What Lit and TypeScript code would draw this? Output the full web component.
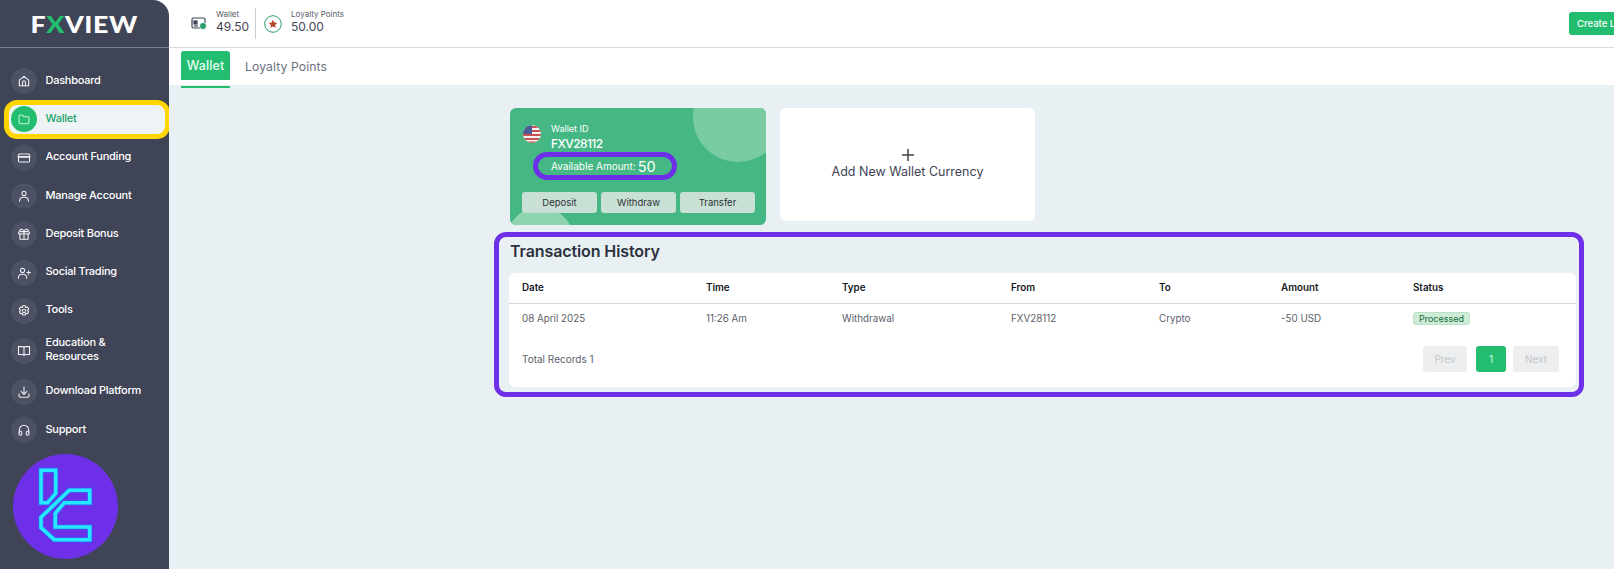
import { LitElement, html, css, svg } from "lit";
import { customElement } from "lit/decorators.js";

const icons: Record<string, any> = {
  home: svg`<path d="M4 10.500 12 4l8 6.500V20H4z"/><path d="M9.500 20v-6a2.500 2.500 0 0 1 5 0v6"/>`,
  folder: svg`<path d="M3.500 7a2 2 0 0 1 2-2h4l2 3h7a2 2 0 0 1 2 2v8a2 2 0 0 1-2 2h-13a2 2 0 0 1-2-2z"/>`,
  card: svg`<rect x="2.500" y="5" width="19" height="14" rx="2"/><path d="M2.500 10h19" stroke-width="3"/>`,
  user: svg`<circle cx="12" cy="7.500" r="3.500"/><path d="M4.500 21v-1.500a6 6 0 0 1 6-5.500h3a6 6 0 0 1 6 5.500V21"/>`,
  gift: svg`<rect x="3" y="8" width="18" height="4"/><path d="M5 12v9h14v-9M12 8v13M12 8c-2-5-7-5-7-2 0 2 4 2 7 2zM12 8c2-5 7-5 7-2 0 2-4 2-7 2z"/>`,
  userPlus: svg`<circle cx="9.500" cy="7.500" r="3.500"/><path d="M2.500 21v-1.500a6 6 0 0 1 6-5.500h2a6 6 0 0 1 6 5.500V21M20 8v6M17 11h6"/>`,
  gear: svg`<circle cx="12" cy="12" r="3"/><path d="M10 3h4l1 3 3-.8 2 3.400-2 2.400 2 2.400-2 3.400-3-.8-1 3h-4l-1-3-3 .8-2-3.400 2-2.400-2-2.400 2-3.400 3 .8z"/>`,
  book: svg`<path d="M2.500 4.500H9c1.700 0 3 1 3 2.500 0-1.500 1.300-2.500 3-2.500h6.500V18H14.500c-1.300 0-2.500.6-2.500 2 0-1.400-1.200-2-2.500-2H2.500zM12 7v13"/>`,
  download: svg`<path d="M3.500 15v4a2 2 0 0 0 2 2h13a2 2 0 0 0 2-2v-4M12 3v13M7 11l5 5 5-5"/>`,
  headset: svg`<path d="M4 16v-4a8 8 0 0 1 16 0v4"/><rect x="3.500" y="14" width="4.500" height="7" rx="2"/><rect x="16" y="14" width="4.500" height="7" rx="2"/>`,
};

const nav = [
  ["Dashboard", "home"],
  ["Wallet", "folder"],
  ["Account Funding", "card"],
  ["Manage Account", "user"],
  ["Deposit Bonus", "gift"],
  ["Social Trading", "userPlus"],
  ["Tools", "gear"],
  ["Education & Resources", "book"],
  ["Download Platform", "download"],
  ["Support", "headset"],
];

@customElement("app-root")
export class AppRoot extends LitElement {
  static styles = css`
    :host { display: block; width: 1614px; height: 569px; overflow: hidden; background: #fff; font-family: Inter, "Liberation Sans", sans-serif; }
    * { box-sizing: border-box; }
    .shell { display: grid; grid-template-columns: 169px 1fr; height: 569px; }
    .side { background: #3f4456; border-top-right-radius: 16px; color: #fff; display: flex; flex-direction: column; min-width: 0; }
    .brand { height: 48px; padding-top: 4px; border-bottom: 1px solid #7b7f8d; display: flex; align-items: center; justify-content: center; font: 900 22.500px/1 Lato, sans-serif; color: #fff; }
    .brand span { display: inline-block; transform: scaleX(1.19); letter-spacing: 0.5px; }
    .brand b { color: #22bd6f; font-weight: 900; }
    .nav { padding-top: 14px; display: flex; flex-direction: column; }
    .item { height: 38.300px; display: flex; align-items: center; gap: 8.500px; padding-left: 11px; font-size: 11px; font-weight: 500; line-height: 15px; letter-spacing: -0.25px; }
    .item .t { position: relative; top: -1px; }
    .item.two { height: 42.500px; }
    .item.two .t { top: -2px; width: 90px; line-height: 14px; }
    .ic { width: 26px; height: 26px; border-radius: 50%; background: #4c5163; display: flex; align-items: center; justify-content: center; flex: none; }
    .ic svg { width: 14px; height: 14px; fill: none; stroke: #f2f3f5; stroke-width: 1.800; stroke-linecap: round; stroke-linejoin: round; }
    .item.on { width: 166px; margin-left: 4px; padding-left: 2px; border: 5px solid #ffd500; border-radius: 13px; background: #eef3f5; color: #22a56a; }
    .item.on .ic { background: #22bd6f; }
    .item.on .ic svg { stroke: #c5f3d9; }
    .tc { margin: 4.500px 0 0 13px; width: 105px; height: 105px; display: block; }
    .main { display: flex; flex-direction: column; min-width: 0; }
    .top { height: 48px; border-bottom: 1px solid #d9dcdf; display: flex; align-items: center; padding-left: 22px; position: relative; }
    .stat { display: flex; align-items: center; gap: 9px; }
    .stat small { display: block; font-size: 8px; line-height: 9px; color: #555b66; margin-top: -2px; }
    .stat span { display: block; font-size: 12px; line-height: 16px; color: #3f4456; }
    .div { width: 1px; height: 31px; background: #c9ccd1; margin: 0 8px 0 6px; }
    .create { position: absolute; left: 1400px; top: 12px; width: 80px; height: 23px; background: #22bd6f; color: #fff; border-radius: 3px; font-size: 9.500px; font-weight: 500; display: flex; align-items: center; padding-left: 8px; white-space: nowrap; }
    .tabs { height: 37px; display: flex; padding-left: 12px; gap: 15px; background: #fff; }
    .tab { font-size: 12.200px; color: #6b7280; display: flex; align-items: center; height: 36px; letter-spacing: .1px; }
    .tab.on { width: 49px; justify-content: center; color: #e6fff2; font-weight: 500; position: relative; padding: 0; height: 29px; margin-top: 3px; background: #22bd6f; border-radius: 3px 3px 0 0; font-size: 12.500px; }
    .tab.on::after { content: ""; position: absolute; left: 0; right: 0; bottom: -8px; height: 2px; background: #22bd6f; }
    .body { flex: 1; background: #e9f0f3; padding: 23px 30px 0 325px; display: flex; flex-direction: column; }
    .cards { display: flex; gap: 14px; margin-left: 16px; align-items: flex-start; }
    .wallet { width: 256px; height: 117px; border-radius: 6px; background: #45b785; position: relative; overflow: hidden; color: #fff; }
    .blob1 { position: absolute; width: 90px; height: 90px; border-radius: 50%; background: #79cba4; left: 183px; top: -36px; }
    .blob2 { position: absolute; width: 68px; height: 68px; border-radius: 50%; background: #8ed4b1; left: -4px; top: 99px; }
    .winner { position: relative; display: flex; flex-direction: column; height: 100%; padding: 13px 11px 0 12px; }
    .idrow { display: flex; gap: 10px; padding-left: 1px; }
    .flag { width: 18px; height: 18px; margin-top: 4px; border-radius: 50%; flex: none; }
    .idrow small { display: block; font-size: 9px; line-height: 11px; margin-top: 2px; }
    .idrow strong { display: block; font-size: 12px; line-height: 16px; font-weight: 500; margin-top: 2px; letter-spacing: -.6px; }
    .pill { margin: 0 0 0 11px; width: 144px; height: 28px; border: 5px solid #6d2fe8; border-radius: 14px; background: #45b785; display: flex; align-items: center; padding-left: 13px; gap: 2px; font-size: 10px; white-space: nowrap; }
    .pill b { font-size: 14.500px; font-weight: 400; }
    .btns { display: flex; gap: 4px; margin-top: 12px; }
    .btns div { width: 75px; height: 21px; border-radius: 3px; background: #c9e0d5; color: #2c3038; font-size: 9.500px; display: flex; align-items: center; justify-content: center; }
    .add { width: 255px; height: 113px; border-radius: 6px; background: #fff; display: flex; flex-direction: column; align-items: center; justify-content: center; color: #3f4456; font-size: 12.500px; gap: 2px; padding-bottom: 2px; }
    .add svg { width: 14px; height: 14px; stroke: #444; stroke-width: 1.500; display: block; }
    .box { margin-top: 7px; height: 165px; border: 5px solid #6d2fe8; border-radius: 12px; padding: 0 3px 5px 10px; display: flex; flex-direction: column; }
    .box h2 { margin: 0; height: 36px; padding: 0 0 8px 1px; display: flex; align-items: center; font-size: 16px; font-weight: 600; letter-spacing: -.1px; color: #2c3040; }
    .table { flex: 1; background: #fff; border-radius: 6px; display: flex; flex-direction: column; }
    .row { display: grid; grid-template-columns: 184px 136px 169px 148px 122px 132px 1fr; padding-left: 13px; align-items: center; font-size: 9.800px; }
    .head { height: 30.500px; border-bottom: 1px solid #d5d8dc; font-weight: 600; color: #15181e; }
    .cells { height: 30px; color: #5b616b; }
    .badge { display: inline-block; width: 57px; height: 13px; border-radius: 3px; background: #cdebd6; border: 1px solid #b9e2c7; color: #176a3a; font-size: 9px; line-height: 11px; text-align: center; }
    .foot { flex: 1; display: flex; align-items: center; justify-content: space-between; padding: 0 17px 2px 13px; font-size: 10px; color: #5b616b; }
    .pager { display: flex; gap: 9px; }
    .pager div { height: 26px; border-radius: 3px; background: #eceeef; color: #c4c7ca; display: flex; align-items: center; justify-content: center; width: 44px; }
    .pager .cur { width: 30px; background: #22bd6f; color: #d8f7e6; margin-right: -2px; }
    .pager .nx { width: 46px; }
  `;

  render() {
    return html`<div class="shell">
      <aside class="side">
        <div class="brand"><span>F<b>X</b>VIEW</span></div>
        <nav class="nav">
          ${nav.map(([n, i]) => html`<div class="item ${n === "Wallet" ? "on" : ""} ${n.startsWith("Education") ? "two" : ""}">
            <span class="ic"><svg viewBox="0 0 24 24">${icons[i]}</svg></span><span class="t">${n}</span></div>`)}
        </nav>
        <svg class="tc" viewBox="13 454 105 105">
          <circle cx="65.500" cy="506.500" r="52.500" fill="#6d2fe8"/>
          <g fill="none" stroke="#2a6cf5" stroke-width="5">
            <path d="M41 470.300H55.700V493.300L47.700 502.700H41Z"/>
            <path d="M89.700 490.300H69.300L41 517.300V527.700L54.300 539.700H89.700V527H55.300V513.300L64.300 502.700H89.700Z"/>
          </g>
          <g fill="none" stroke="#27e6ff" stroke-width="3.600">
            <path d="M41 470.300H55.700V493.300L47.700 502.700H41Z"/>
            <path d="M89.700 490.300H69.300L41 517.300V527.700L54.300 539.700H89.700V527H55.300V513.300L64.300 502.700H89.700Z"/>
          </g>
        </svg>
      </aside>
      <main class="main">
        <header class="top">
          <div class="stat">
            <svg width="16" height="14" viewBox="0 0 16 14" fill="none" stroke="#3f4456" stroke-width="1.200"><rect x="1" y="1" width="13" height="10" rx="1.500"/><rect x="3" y="4" width="3" height="3" fill="#3f4456"/><path d="M3 9h4"/><circle cx="12" cy="9" r="3.500" fill="#2a9d6b" stroke="#fff" stroke-width=".8"/></svg>
            <div><small>Wallet</small><span>49.50</span></div>
          </div>
          <div class="div"></div>
          <div class="stat">
            <svg width="18" height="18" viewBox="0 0 18 18"><circle cx="9" cy="9" r="8.300" fill="#fff" stroke="#2a9d6b" stroke-width="1"/><path d="M9 4.800l1.300 2.700 2.900.4-2.100 2 .5 2.900L9 11.400l-2.600 1.400.5-2.900-2.100-2 2.900-.4z" fill="#b5442c"/></svg>
            <div><small>Loyalty Points</small><span>50.00</span></div>
          </div>
          <div class="create">Create Live Account</div>
        </header>
        <div class="tabs"><div class="tab on">Wallet</div><div class="tab">Loyalty Points</div></div>
        <section class="body">
          <div class="cards">
            <div class="wallet">
              <div class="blob1"></div><div class="blob2"></div>
              <div class="winner">
                <div class="idrow">
                  <svg class="flag" viewBox="0 0 18 18">
                    <rect width="18" height="18" fill="#f3f3f3"/>
                    <path d="M0 1h18v2H0zM0 5h18v2H0zM0 9h18v2H0zM0 13h18v2H0zM0 16.500h18v2H0z" fill="#c8524f"/>
                    <rect width="9" height="9" fill="#4a5c94"/>
                  </svg>
                  <div><small>Wallet ID</small><strong>FXV28112</strong></div>
                </div>
                <div class="pill">Available Amount: <b>50</b></div>
                <div class="btns"><div>Deposit</div><div>Withdraw</div><div>Transfer</div></div>
              </div>
            </div>
            <div class="add">
              <svg viewBox="0 0 14 14"><path d="M7 1v12M1 7h12"/></svg>
              Add New Wallet Currency
            </div>
          </div>
          <div class="box">
            <h2>Transaction History</h2>
            <div class="table">
              <div class="row head"><div>Date</div><div>Time</div><div>Type</div><div>From</div><div>To</div><div>Amount</div><div>Status</div></div>
              <div class="row cells"><div>08 April 2025</div><div>11:26 Am</div><div>Withdrawal</div><div>FXV28112</div><div>Crypto</div><div>-50 USD</div><div><span class="badge">Processed</span></div></div>
              <div class="foot"><div>Total Records 1</div><div class="pager"><div>Prev</div><div class="cur">1</div><div class="nx">Next</div></div></div>
            </div>
          </div>
        </section>
      </main>
    </div>`;
  }
}
